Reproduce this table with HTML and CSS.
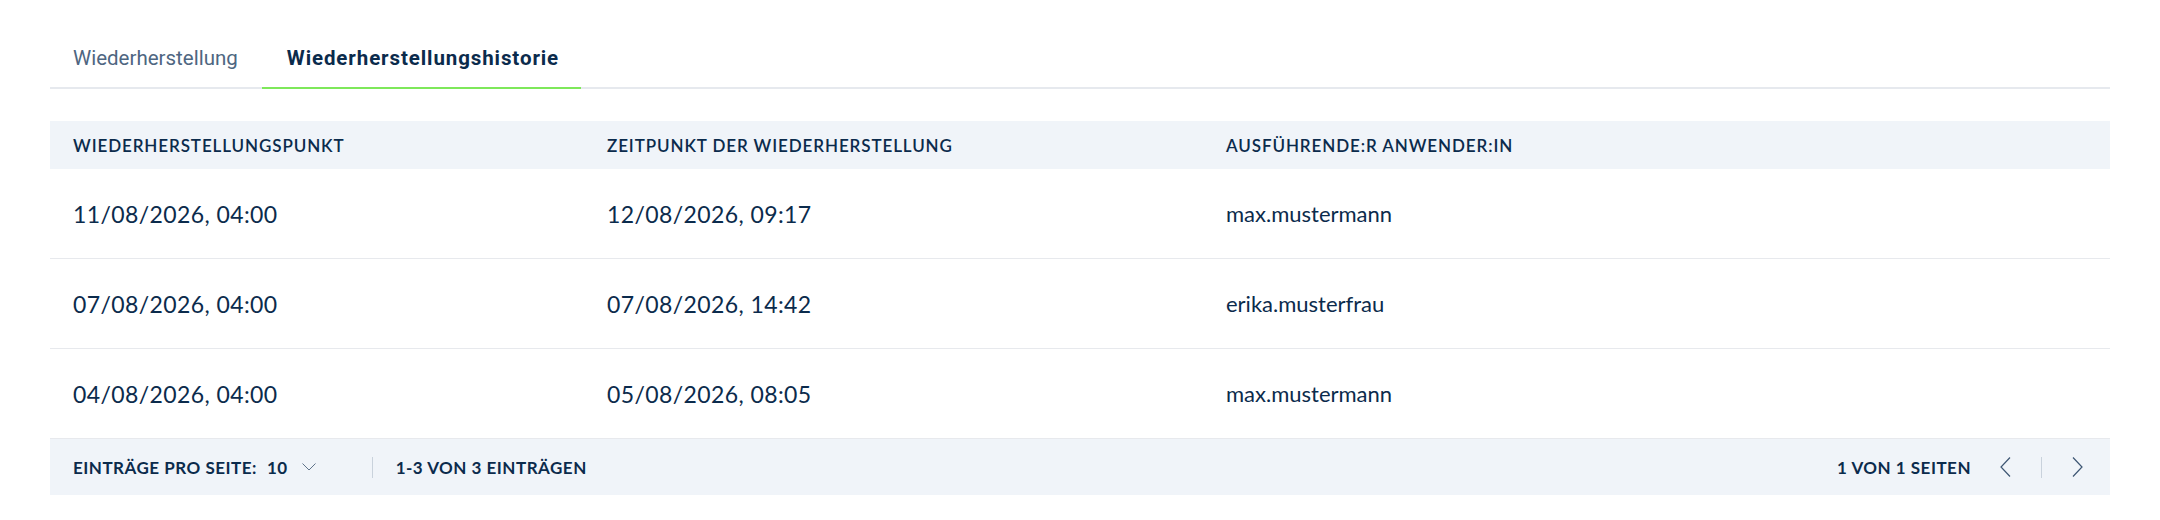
FILE: index.html
```html
<!DOCTYPE html>
<html>
<head>
  <title>Wiederherstellungshistorie</title>
  <meta charset="UTF-8">
  <link rel="stylesheet" href="styles.css">
</head>
<body>
  <div class="page">
    <div class="tabs">
      <div class="tab">Wiederherstellung</div>
      <div class="tab tab-active">Wiederherstellungshistorie</div>
    </div>

    <div class="table">
      <div class="table-head">
        <div class="cell">Wiederherstellungspunkt</div>
        <div class="cell">Zeitpunkt der Wiederherstellung</div>
        <div class="cell">Ausführende:r Anwender:in</div>
      </div>
      <div class="table-row">
        <div class="cell date">11/08/2026, 04:00</div>
        <div class="cell date">12/08/2026, 09:17</div>
        <div class="cell">max.mustermann</div>
      </div>
      <div class="table-row">
        <div class="cell date">07/08/2026, 04:00</div>
        <div class="cell date">07/08/2026, 14:42</div>
        <div class="cell">erika.musterfrau</div>
      </div>
      <div class="table-row">
        <div class="cell date">04/08/2026, 04:00</div>
        <div class="cell date">05/08/2026, 08:05</div>
        <div class="cell">max.mustermann</div>
      </div>

      <!-- Paginierung -->
      <div class="pager">
        <div class="pager-left">
          <div class="page-size">
            <span>Einträge pro Seite:</span>
            <span class="page-size-value">10</span>
            <svg class="chevron-down" width="14" height="8" viewBox="0 0 14 8">
              <path d="M0.5 0.5 L7 7 L13.5 0.5" fill="none" stroke="#5f738a" stroke-width="1"/>
            </svg>
          </div>
          <div class="divider"></div>
          <span>1-3 von 3 Einträgen</span>
        </div>
        <div class="pager-right">
          <span>1 von 1 Seiten</span>
          <button class="page-btn" title="Zurück">
            <svg width="11" height="20" viewBox="0 0 11 20">
              <path d="M10 0.5 L1 10 L10 19.5" fill="none" stroke="#3d5673" stroke-width="1.2"/>
            </svg>
          </button>
          <div class="divider"></div>
          <button class="page-btn" title="Weiter">
            <svg width="11" height="20" viewBox="0 0 11 20">
              <path d="M1 0.5 L10 10 L1 19.5" fill="none" stroke="#3d5673" stroke-width="1.2"/>
            </svg>
          </button>
        </div>
      </div>
    </div>
  </div>
</body>
</html>
```

FILE: styles.css
```css
body {
  margin: 0;
  font-family: Lato, "Noto Sans", sans-serif;
  color: #0b2b4c;
  background: #fff;
}
.page {
  padding: 0 50px;
}
.tabs {
  display: flex;
  border-bottom: 2px solid #e6e9ee;
}
.tab {
  font-family: Roboto, "Noto Sans", sans-serif;
  font-size: 20.5px;
  line-height: 24px;
  padding: 46px 24px 17px 23px;
  color: #4e6681;
  margin-bottom: -2px;
  border-bottom: 2px solid transparent;
}
.tab-active {
  font-weight: 700;
  letter-spacing: 0.9px;
  padding-left: 25px;
  padding-right: 22px;
  color: #0b2b4c;
  border-bottom-color: #7ee85a;
}
.table {
  margin-top: 32px;
}
.table-head,
.table-row {
  display: grid;
  grid-template-columns: 534px 619px 1fr;
  align-items: center;
}
.table-head {
  height: 48px;
  background-color: #f0f4f9;
  font-size: 17px;
  font-weight: 600;
  letter-spacing: 0.9px;
  text-transform: uppercase;
}
.table-row {
  height: 89px;
  border-bottom: 1px solid #e7e9ed;
  font-size: 22px;
}
.table-row:last-of-type {
  border-bottom: none;
}
.cell {
  padding-left: 23px;
}
.date {
  font-size: 23px;
  letter-spacing: 0.4px;
}
.pager {
  display: flex;
  justify-content: space-between;
  align-items: center;
  height: 56px;
  padding: 0 27px 0 23px;
  background-color: #f0f4f9;
  font-size: 17px;
  font-weight: 700;
  letter-spacing: 0.5px;
  text-transform: uppercase;
}
.pager-left,
.pager-right {
  display: flex;
  align-items: center;
}
.page-size {
  display: flex;
  align-items: center;
  gap: 10px;
}
.chevron-down {
  margin-left: 4px;
}
.divider {
  width: 1px;
  height: 21px;
  background-color: #c9d2dc;
  margin: 0 23px 0 56px;
}
.pager-right .divider {
  margin: 0 30px;
}
.page-btn {
  display: flex;
  align-items: center;
  border: none;
  background: none;
  padding: 0;
  cursor: pointer;
}
.pager-right span {
  margin-right: 29px;
}
```
